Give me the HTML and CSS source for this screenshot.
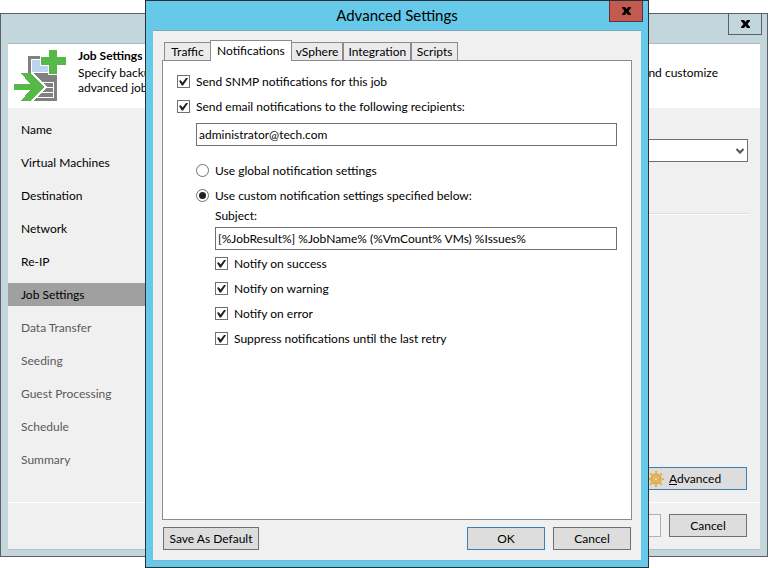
FILE: index.html
```
<!DOCTYPE html>
<html lang="en">
<head>
  <meta charset="UTF-8">
  <title>Advanced Settings</title>
  <link rel="stylesheet" href="styles.css">
</head>
<body>
  <div class="desktop">

    <!-- Wizard window -->
    <div class="window wizard">
      <div class="titlebar">
        <button class="close-btn" type="button" aria-label="Close">
          <svg width="9" height="8" viewBox="0 0 9 8"><path d="M0 0h3l1.500 2L6 0h3v1L6.500 4 9 7v1H6L4.500 6 3 8H0V7l2.500-3L0 1z"/></svg>
        </button>
      </div>

      <div class="window-body">
        <div class="wizard-header">
          <svg class="wizard-icon" width="52" height="52" viewBox="0 0 52 52" shape-rendering="crispEdges">
            <path fill="#808080" d="M14 6h29v45H14z"/>
            <path fill="#fff" d="M17 9h18v14H17z"/>
            <path fill="#bcd5ee" d="M18 10h17v12H18z"/>
            <path fill="#fff" d="M26 6h8V0h10v6h8v10h-8v9H34v-9h-8z"/>
            <path fill="#fff" d="M14 23h6l13 14-14 15h-5z"/>
            <path fill="#fff" d="M27 32h13v16H22v-1h17v-4H26v-1h13v-4H29v-1h10v-4H27z"/>
            <path fill="#55b848" d="M35 0h8v7h9v8h-9v9h-8v-9h-8V7h8z"/>
            <path fill="#55b848" d="M7 23h10l13 14-13 14H7l9-11H0v-6h16z"/>
          </svg>
          <div class="wizard-heading">
            <h1>Job Settings</h1>
            <p class="wizard-intro"><span>Specify backup</span> <span>and customize</span></p>
            <p>advanced job settings.</p>
          </div>
        </div>

        <div class="wizard-main">
          <nav class="steps">
            <a href="#">Name</a>
            <a href="#">Virtual Machines</a>
            <a href="#">Destination</a>
            <a href="#">Network</a>
            <a href="#">Re-IP</a>
            <a href="#" class="current">Job Settings</a>
            <a href="#" class="pending">Data Transfer</a>
            <a href="#" class="pending">Seeding</a>
            <a href="#" class="pending">Guest Processing</a>
            <a href="#" class="pending">Schedule</a>
            <a href="#" class="pending">Summary</a>
          </nav>
          <div class="step-page">
            <div class="select-wrap">
              <select aria-label="Repository"><option></option></select>
              <svg width="8" height="6" viewBox="0 0 8 6"><path d="M.500 1L4 4.500 7.500 1" fill="none" stroke="#555" stroke-width="2"/></svg>
            </div>
            <hr>
            <button class="btn btn-primary advanced-btn" type="button">
              <svg width="16" height="16" viewBox="0 0 16 16" fill="none" stroke="#e3a93a">
                <circle cx="8" cy="8" r="7" stroke-width="2" stroke-dasharray="2 3.498" stroke-dashoffset="1"/>
                <circle cx="8" cy="8" r="4.500" stroke-width="2.500"/>
                <circle cx="8" cy="8" r="2" stroke-width="1.500"/>
              </svg>
              <span><u>A</u>dvanced</span>
            </button>
          </div>
        </div>

        <div class="wizard-footer">
          <button class="btn" type="button" disabled></button>
          <button class="btn" type="button">Cancel</button>
        </div>
      </div>
    </div>

    <!-- Advanced settings dialog -->
    <div class="window dialog">
      <div class="titlebar">
        <h2>Advanced Settings</h2>
        <button class="close-btn" type="button" aria-label="Close">
          <svg width="9" height="8" viewBox="0 0 9 8"><path d="M0 0h3l1.500 2L6 0h3v1L6.500 4 9 7v1H6L4.500 6 3 8H0V7l2.500-3L0 1z"/></svg>
        </button>
      </div>

      <form class="window-body dialog-body">
        <div class="tabs">
          <button class="tab" type="button">Traffic</button>
          <button class="tab active" type="button">Notifications</button>
          <button class="tab" type="button">vSphere</button>
          <button class="tab" type="button">Integration</button>
          <button class="tab" type="button">Scripts</button>
        </div>

        <div class="tab-panel">
          <label class="option"><input type="checkbox" checked> Send SNMP notifications for this job</label>
          <label class="option"><input type="checkbox" checked> Send email notifications to the following recipients:</label>
          <div class="indent">
            <input class="text-input" type="text" value="administrator@tech.com" aria-label="Recipients">
            <div class="mode">
              <label class="option"><input type="radio" name="mode"> Use global notification settings</label>
              <label class="option"><input type="radio" name="mode" checked> Use custom notification settings specified below:</label>
            </div>
            <div class="indent">
              <label class="field-label" for="subject">Subject:</label>
              <input class="text-input" type="text" id="subject" value="[%JobResult%] %JobName% (%VmCount% VMs) %Issues%">
              <div class="notify">
                <label class="option"><input type="checkbox" checked> Notify on success</label>
                <label class="option"><input type="checkbox" checked> Notify on warning</label>
                <label class="option"><input type="checkbox" checked> Notify on error</label>
                <label class="option"><input type="checkbox" checked> Suppress notifications until the last retry</label>
              </div>
            </div>
          </div>
        </div>

        <div class="dialog-footer">
          <button class="btn save-btn" type="button">Save As Default</button>
          <button class="btn btn-primary" type="button">OK</button>
          <button class="btn" type="button">Cancel</button>
        </div>
      </form>
    </div>

  </div>
</body>
</html>
```
FILE: styles.css
```
* {
  box-sizing: border-box;
}

body {
  margin: 0;
  font-family: Lato, "Open Sans", sans-serif;
  font-size: 12px;
  line-height: 15px;
  color: #000;
  background-color: #fff;
}

button,
input,
select {
  font: inherit;
  color: inherit;
}

h1,
h2,
p {
  margin: 0;
  font-weight: normal;
}

.desktop {
  position: relative;
  height: 100vh;
  min-height: 560px;
  overflow: hidden;
}

/* Windows */
.window {
  position: absolute;
  display: flex;
  flex-direction: column;
  border: 1px solid #5d6167;
}

.wizard {
  top: 13px;
  right: 0;
  bottom: 11px;
  left: 0;
  padding-bottom: 6px;
  background-color: #c3d6dc;
}

.dialog {
  top: 0;
  bottom: 0;
  left: 145px;
  width: 504px;
  padding-bottom: 6px;
  background-color: #66c9ea;
  border-color: #2b2f36;
}

.titlebar {
  display: grid;
  grid-template-columns: 1fr auto 1fr;
  height: 29px;
  padding: 0 5px;
}

.titlebar h2 {
  grid-column: 2;
  font-size: 15px;
  line-height: 29px;
}

.close-btn {
  grid-column: 3;
  justify-self: end;
  display: flex;
  align-items: center;
  justify-content: center;
  width: 34px;
  height: 21px;
  padding: 0;
  background: none;
  border: 1px solid #5d6167;
  border-top: none;
}

.dialog .close-btn {
  background-color: #c35a50;
  border-color: #6a2f35;
}

.window-body {
  flex: 1;
  display: flex;
  flex-direction: column;
  margin: 0 7px;
  background-color: #f0f0f0;
  border-top: 1px solid #a9bac0;
  border-bottom: 1px solid #b3c3c9;
}

/* Buttons */
.btn {
  width: 78px;
  height: 23px;
  padding: 0;
  background-color: #dddddd;
  border: 1px solid #707070;
}

.btn-primary {
  border-color: #3c7fb1;
}

.btn:disabled {
  background-color: #f4f4f4;
  border-color: #adb2b5;
}

/* Wizard */
.wizard-header {
  display: flex;
  gap: 12px;
  height: 64px;
  padding: 4px 42px 0 6px;
  background-color: #fff;
}

.wizard-icon {
  flex: none;
  margin-top: 2px;
}

.wizard-heading {
  flex: 1;
}

.wizard-heading h1 {
  font-size: 12px;
  font-weight: bold;
  line-height: 15px;
  margin-bottom: 2px;
}

.wizard-intro {
  display: flex;
  justify-content: space-between;
}

.wizard-main {
  flex: 1;
  display: flex;
  border-bottom: 1px solid #fff;
}

.steps {
  display: flex;
  flex-direction: column;
  gap: 10px;
  width: 150px;
  padding-top: 10px;
}

.steps a {
  padding-left: 13px;
  line-height: 23px;
  color: #000;
  text-decoration: none;
}

.steps .current {
  background-color: #a0a0a0;
}

.steps .pending {
  color: #5a5a5a;
}

.step-page {
  flex: 1;
  display: flex;
  flex-direction: column;
  padding: 31px 12px 12px;
}

.select-wrap {
  display: grid;
  align-items: center;
}

.select-wrap select,
.select-wrap svg {
  grid-area: 1 / 1;
}

.select-wrap select {
  height: 23px;
  appearance: none;
  background-color: #fff;
  border: 1px solid #707070;
  border-radius: 0;
}

.select-wrap svg {
  justify-self: end;
  margin-right: 4px;
}

.step-page hr {
  width: 100%;
  margin: 51px 0 0;
  border: none;
  border-top: 1px solid #d5dfe5;
  border-bottom: 1px solid #fff;
}

.advanced-btn {
  display: flex;
  align-items: center;
  gap: 5px;
  width: 110px;
  padding-left: 10px;
  margin: auto 1px 0 auto;
}

.wizard-footer {
  display: flex;
  justify-content: flex-end;
  gap: 8px;
  height: 46px;
  padding: 11px 13px;
}

/* Dialog */
.dialog-body {
  padding: 9px 9px 10px;
  border-top-color: #7fa6b8;
  border-bottom-color: #7fb4cc;
}

.tabs {
  display: flex;
  align-items: flex-end;
  padding-left: 2px;
}

.tab {
  min-width: 47px;
  height: 18px;
  padding: 0 4px;
  line-height: 17px;
  background-color: #ebebeb;
  border: 1px solid #8b8b94;
  border-bottom: none;
}

.tab.active {
  position: relative;
  z-index: 1;
  height: 21px;
  margin: 0 -1px -1px;
  padding: 0 6px 1px;
  background-color: #fff;
}

.tab-panel {
  flex: 1;
  margin-bottom: 7px;
  padding: 8px 14px;
  background-color: #fff;
  border: 1px solid #8b8b94;
}

.option {
  display: flex;
  align-items: center;
  gap: 6px;
  height: 25px;
}

.indent {
  padding-left: 19px;
}

.text-input {
  display: block;
  width: 100%;
  height: 23px;
  padding: 0 2px;
  background-color: #fff;
  border: 1px solid #707070;
}

.option + .indent {
  padding-top: 4px;
}

.mode {
  margin-top: 12px;
}

.field-label {
  display: block;
  padding-bottom: 4px;
}

.notify {
  margin-top: 1px;
}

input[type="checkbox"],
input[type="radio"] {
  display: grid;
  place-items: center;
  flex: none;
  width: 13px;
  height: 13px;
  margin: 0;
  appearance: none;
  background-color: #fff;
  border: 1px solid #707070;
}

input[type="radio"] {
  border-radius: 50%;
}

input[type="checkbox"]:checked::before {
  content: "";
  width: 9px;
  height: 8px;
  background-color: #212121;
  clip-path: polygon(0 40%, 20% 35%, 40% 62%, 82% 0, 100% 10%, 45% 100%, 30% 100%);
}

input[type="radio"]:checked::before {
  content: "";
  width: 7px;
  height: 7px;
  background-color: #212121;
  border-radius: 50%;
}

.dialog-footer {
  display: flex;
  gap: 8px;
  padding: 0 1px;
}

.save-btn {
  width: 96px;
  margin-right: auto;
}
```
